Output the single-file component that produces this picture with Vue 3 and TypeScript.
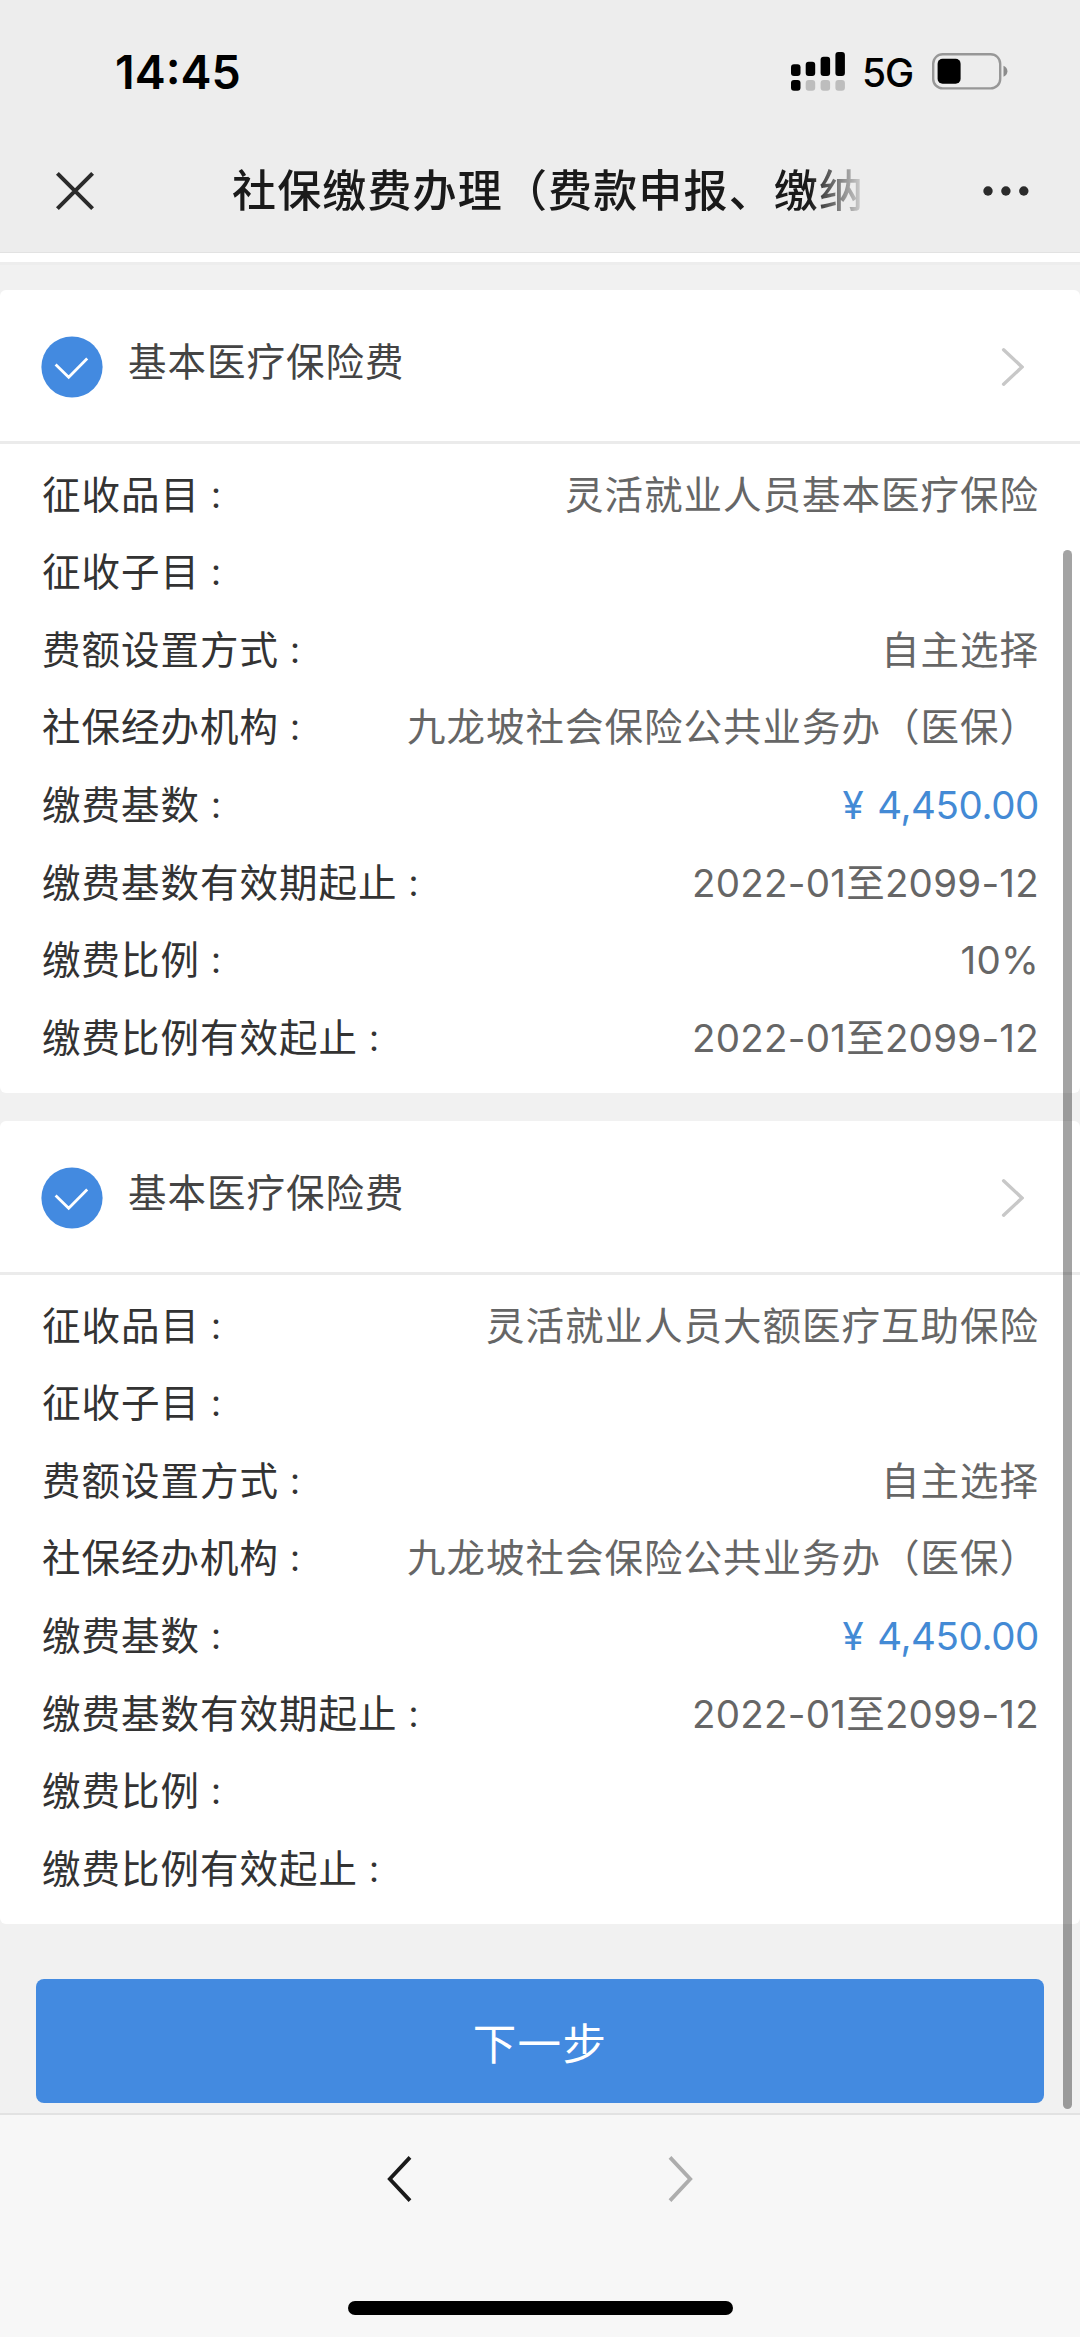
<script setup lang="ts">
interface Row {
  label: string
  value: string
  kind?: 'money' | 'number'
}

interface Insurance {
  title: string
  rows: Row[]
}

const makeRows = (item: string, ratio: string, ratioPeriod: string): Row[] => [
  { label: '征收品目', value: item },
  { label: '征收子目', value: '' },
  { label: '费额设置方式', value: '自主选择' },
  { label: '社保经办机构', value: '九龙坡社会保险公共业务办（医保）' },
  { label: '缴费基数', value: '4,450.00', kind: 'money' },
  { label: '缴费基数有效期起止', value: '2022-01至2099-12', kind: 'number' },
  { label: '缴费比例', value: ratio, kind: 'number' },
  { label: '缴费比例有效起止', value: ratioPeriod, kind: 'number' },
]

const cards: Insurance[] = [
  { title: '基本医疗保险费', rows: makeRows('灵活就业人员基本医疗保险', '10%', '2022-01至2099-12') },
  { title: '基本医疗保险费', rows: makeRows('灵活就业人员大额医疗互助保险', '', '') },
]
</script>

<template>
  <div class="screen">
    <header class="top">
      <div class="status">
        <span class="time">14:45</span>
        <div class="status-right">
          <svg class="signal" width="54" height="40" viewBox="0 0 54 40">
            <rect x="0" y="12.3" width="9.5" height="11.7" rx="3" />
            <rect x="14.7" y="9.7" width="9.5" height="14.3" rx="3" />
            <rect x="29.6" y="4.8" width="9.5" height="19.2" rx="3" />
            <rect x="44.4" y="0" width="9.5" height="24" rx="3" />
            <rect x="0" y="28" width="9.5" height="10.7" rx="3" />
            <g fill="#bdbdbd">
              <rect x="14.7" y="28" width="9.5" height="10.7" rx="3" />
              <rect x="29.6" y="28" width="9.5" height="10.7" rx="3" />
              <rect x="44.4" y="28" width="9.5" height="10.7" rx="3" />
            </g>
          </svg>
          <span class="network">5G</span>
          <svg class="battery" width="76" height="37" viewBox="0 0 76 37">
            <rect x="1.2" y="1.2" width="67" height="34.2" rx="9.5" fill="none" stroke="#979797" stroke-width="2.4" />
            <rect x="5.6" y="5.8" width="23" height="25" rx="5" />
            <path d="M71.5 12.8 Q75.4 14.4 75.4 18.3 Q75.4 22.2 71.5 23.8 Z" fill="#8c8c8c" />
          </svg>
        </div>
      </div>
      <div class="navbar">
        <svg class="close" width="42" height="42" viewBox="0 0 42 42">
          <path d="M3.4 3.4 L38.6 38.6 M38.6 3.4 L3.4 38.6" />
        </svg>
        <h1 class="title">社保缴费办理（费款申报、缴纳</h1>
        <svg class="more" width="46" height="10" viewBox="0 0 46 10">
          <circle cx="5" cy="5" r="4.7" />
          <circle cx="22.9" cy="5" r="4.7" />
          <circle cx="40.8" cy="5" r="4.7" />
        </svg>
      </div>
    </header>

    <main class="content">
      <div class="strip"></div>
      <section v-for="(card, i) in cards" :key="i" class="card">
        <div class="card-head">
          <svg class="check" width="62" height="62" viewBox="0 0 62 62">
            <circle cx="31" cy="31" r="30.6" fill="#438ae0" />
            <path d="M14.6 28.4 L27.7 41.2 L46.2 22.6" />
          </svg>
          <span class="card-title">{{ card.title }}</span>
          <svg class="arrow" width="24" height="40" viewBox="0 0 24 40">
            <path d="M3.6 2.8 L22 20 L3.6 37.2" />
          </svg>
        </div>
        <div class="rows">
          <div v-for="row in card.rows" :key="row.label" class="row">
            <span class="label">{{ row.label }}<span class="colon">：</span></span>
            <span v-if="row.kind === 'money'" class="value money"><span class="yen">¥</span>{{ row.value }}</span>
            <span v-else class="value" :class="row.kind">{{ row.value }}</span>
          </div>
        </div>
      </section>
      <button class="next" type="button">下一步</button>
      <div class="scrollbar"></div>
    </main>

    <footer class="toolbar">
      <div class="history">
        <svg class="back" width="26" height="48" viewBox="0 0 26 48">
          <path d="M23 2.4 L2.8 24 L23 45.6" />
        </svg>
        <svg class="forward" width="26" height="48" viewBox="0 0 26 48">
          <path d="M3 2.4 L23.2 24 L3 45.6" />
        </svg>
      </div>
      <div class="home"></div>
    </footer>
  </div>
</template>

<style>
body {
  margin: 0;
}
</style>

<style scoped>
.screen {
  display: flex;
  flex-direction: column;
  width: 1080px;
  height: 2337px;
  overflow: hidden;
  background: #f1f1f1;
  font-family: Inter, "Noto Sans CJK SC", sans-serif;
}

.top {
  box-sizing: border-box;
  height: 253px;
  background: #ededed;
  border-bottom: 1px solid #e2e2e2;
}

.status {
  display: flex;
  justify-content: space-between;
  height: 132px;
  padding: 0 72px 0 115px;
}

.time {
  margin-top: 44px;
  font-size: 46.5px;
  font-weight: 600;
  line-height: 56px;
  color: #000;
}

.status-right {
  display: flex;
  align-items: flex-start;
}

.signal {
  margin-top: 52px;
}

.network {
  width: 52px;
  margin: 49px 18px 0 17px;
  font-size: 39px;
  font-weight: 500;
  line-height: 47px;
  letter-spacing: -1px;
}

.battery {
  margin-top: 53px;
}

.navbar {
  display: flex;
  align-items: center;
  height: 118px;
  padding: 0 51px 0 54px;
}

.close {
  fill: none;
  stroke: #2b2b2b;
  stroke-width: 4;
}

.title {
  flex: none;
  width: 632px;
  margin: 0 auto 0 136px;
  overflow: hidden;
  font-size: 44px;
  font-weight: 500;
  line-height: 64px;
  letter-spacing: 1.15px;
  white-space: nowrap;
  color: #1a1a1a;
  mask-image: linear-gradient(to right, #000 578px, rgba(0, 0, 0, 0.1) 632px);
}

.more {
  fill: #2b2b2b;
}

.content {
  position: relative;
  height: 1860px;
}

.strip {
  box-sizing: border-box;
  height: 37px;
  border-top: 9px solid #fff;
  box-shadow: inset 0 3px 0 #ededed;
}

.card {
  height: 803px;
  margin-bottom: 28px;
  background: #fff;
  border-radius: 6px;
}

.card-head {
  box-sizing: border-box;
  display: flex;
  align-items: center;
  height: 154px;
  padding: 3px 56px 0 41px;
  border-bottom: 3px solid #ebebeb;
}

.check path {
  fill: none;
  stroke: #fff;
  stroke-width: 2.8;
}

.card-title {
  margin: -10px auto 0 25px;
  font-size: 38.5px;
  line-height: 56px;
  letter-spacing: 1px;
  color: #444;
}

.arrow {
  fill: none;
  stroke: #c8c8c8;
  stroke-width: 3.4;
  stroke-linecap: round;
}

.rows {
  padding: 12.6px 42px 0;
}

.row {
  display: flex;
  justify-content: space-between;
  height: 77.6px;
  font-size: 38.5px;
  line-height: 77.6px;
  white-space: nowrap;
}

.label {
  letter-spacing: 1px;
  color: #333;
}

.colon {
  margin-left: 1px;
  font-family: "Noto Sans CJK TC", sans-serif;
  font-size: 30px;
  line-height: 1;
}

.value {
  letter-spacing: 1px;
  margin-right: -1px;
  color: #666;
}

.number {
  letter-spacing: 0.25px;
}

.money {
  letter-spacing: -0.4px;
  color: #438ad5;
}

.yen {
  margin-right: 14px;
}

.next {
  display: block;
  width: 1008px;
  height: 124px;
  margin: 55px auto 0;
  padding: 0;
  border: 0;
  border-radius: 8px;
  background: #438ae0;
  font-family: inherit;
  font-size: 43.5px;
  letter-spacing: 1.4px;
  color: #fff;
}

.scrollbar {
  position: absolute;
  top: 297px;
  right: 8px;
  width: 9px;
  height: 1559px;
  border-radius: 5px;
  background: rgba(0, 0, 0, 0.36);
}

.toolbar {
  box-sizing: border-box;
  display: flex;
  flex-direction: column;
  align-items: center;
  justify-content: space-between;
  height: 224px;
  padding: 40px 0 22px;
  border-top: 2px solid #e2e2e2;
  background: #f7f7f7;
}

.history {
  display: flex;
  gap: 254px;
}

.history svg {
  fill: none;
  stroke-width: 3.8;
}

.back {
  stroke: #1a1a1a;
}

.forward {
  stroke: #adadad;
}

.home {
  width: 385px;
  height: 14px;
  border-radius: 7px;
  background: #000;
}
</style>
